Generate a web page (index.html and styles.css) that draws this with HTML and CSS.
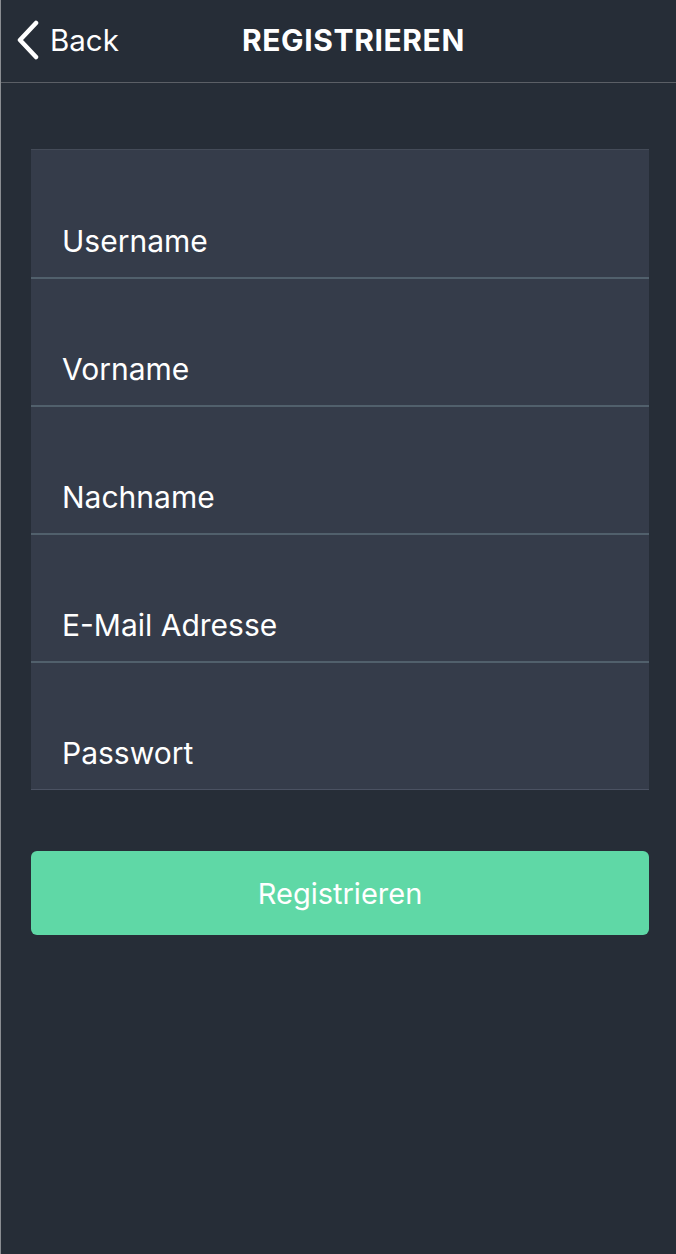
FILE: index.html
```html
<!DOCTYPE html>
<html lang="de">
<head>
<meta charset="utf-8">
<title>Registrieren</title>
<link rel="stylesheet" href="styles.css">
</head>
<body>
<div class="screen">
  <header class="navbar">
    <a class="back" href="#">
      <svg class="chevron" width="26" height="40" viewBox="0 0 26 40" aria-hidden="true">
        <path d="M21 3 L5 20 L21 37" fill="none" stroke="#ffffff" stroke-width="4.5" stroke-linecap="round" stroke-linejoin="round"/>
      </svg>
      <span>Back</span>
    </a>
    <h1 class="title">REGISTRIEREN</h1>
  </header>
  <main class="content">
    <form class="form">
      <div class="field"><span class="label">Username</span></div>
      <div class="field"><span class="label">Vorname</span></div>
      <div class="field"><span class="label">Nachname</span></div>
      <div class="field"><span class="label">E-Mail Adresse</span></div>
      <div class="field"><span class="label">Passwort</span></div>
    </form>
    <button class="submit" type="button">Registrieren</button>
  </main>
</div>
</body>
</html>
```
FILE: styles.css
```css
* { box-sizing: border-box; }
html, body {
  margin: 0;
  padding: 0;
  height: 100%;
  background: #262d37;
}
body {
  font-family: Inter, Roboto, "Liberation Sans", sans-serif;
  color: #ffffff;
}
.screen {
  min-height: 1254px;
  border-left: 1px solid #8a8d92;
  background: #262d37;
}
.navbar {
  height: 83px;
  border-bottom: 1px solid #5b5f66;
  display: flex;
  align-items: center;
  padding-left: 14px;
}
.back {
  display: flex;
  align-items: center;
  gap: 9px;
  color: #ffffff;
  text-decoration: none;
  font-size: 29.5px;
  width: 227px;
  margin-top: -2px;
}
.chevron { display: block; }
.title {
  margin: 0;
  font-size: 30px;
  font-weight: 700;
  letter-spacing: 0.6px;
  margin-top: -2px;
}
.content {
  padding: 66px 27px 0 30px;
}
.form {
  background: #353c4a;
  border-top: 1px solid #444b58;
}
.field {
  height: 128px;
  display: flex;
  align-items: flex-end;
  padding: 0 0 18px 31px;
  border-bottom: 2px solid #51606c;
}
.field:first-child { height: 129px; }
.field:last-child { height: 127px; border-bottom: 1px solid #4b5262; }
.label {
  font-size: 30px;
  color: #ffffff;
}
.submit {
  display: block;
  width: 100%;
  height: 84px;
  margin-top: 61px;
  border: none;
  border-radius: 6px;
  background: #5fd8a6;
  color: #ffffff;
  font-family: Inter, Roboto, "Liberation Sans", sans-serif;
  font-size: 29px;
}
```
